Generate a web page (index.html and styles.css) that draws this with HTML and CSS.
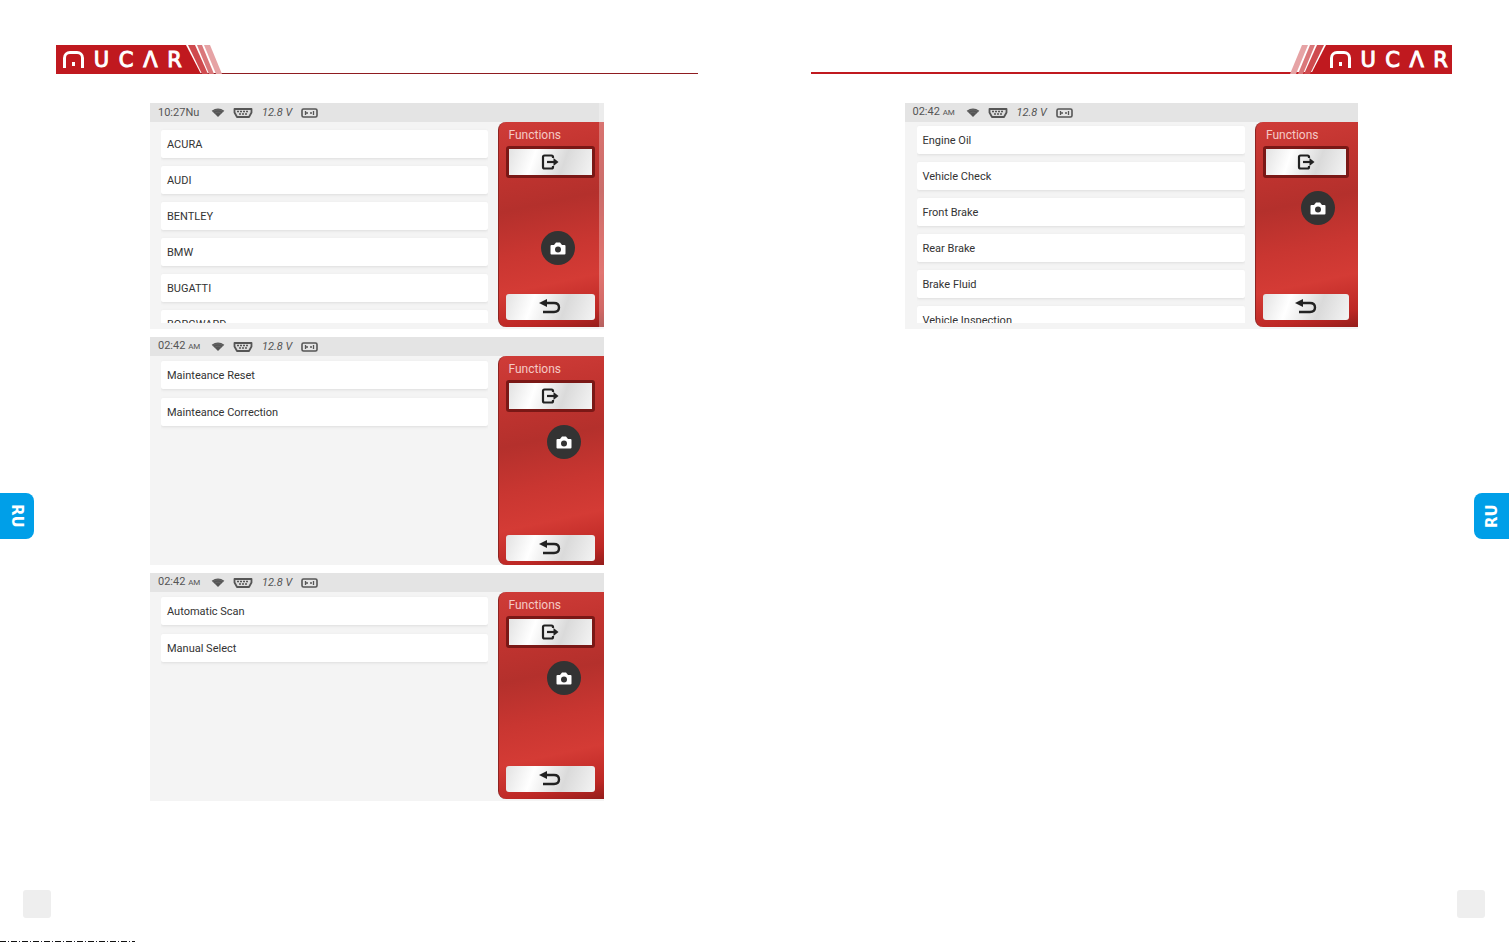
FILE: index.html
```html
<!DOCTYPE html>
<html lang="ru">
<head>
<meta charset="utf-8">
<title>MUCAR</title>
<link rel="stylesheet" href="styles.css">
</head>
<body>
<svg class="defs" aria-hidden="true">
  <symbol id="wifi" viewBox="0 0 14 10"><path d="M0 3Q7-2 14 3L7 10Z" fill="#555"/><path d="M1 4Q7 0 13 4M3 6Q7 3 11 6" fill="none" stroke="#777" stroke-width=".6"/></symbol>
  <symbol id="obd" viewBox="0 0 20 10"><path d="M1.500 1h17v3.500L16 9H4L1.500 4.500Z" fill="#ddd" stroke="#555" stroke-width="1.800" stroke-linejoin="round"/><path d="M4 3.500h12M6 6h8" stroke="#555" stroke-width="1.600" stroke-dasharray="2 1"/></symbol>
  <symbol id="box" viewBox="0 0 17 10"><rect x="1" y="1" width="15" height="8" rx="1.500" fill="none" stroke="#555" stroke-width="1.600"/><path d="M4.500 3v4M4 5h3M9 5h2M12.500 3v4" stroke="#555" stroke-width="1.300"/></symbol>
  <symbol id="exit" viewBox="0 0 18 16"><path d="M12 4V3q0-1.500-1.500-1.500H3.500Q2 1.500 2 3v10q0 1.500 1.500 1.500h7Q12 14.500 12 13v-1" fill="none" stroke="#222" stroke-width="2.200"/><path d="M6 8h8" stroke="#222" stroke-width="2.200"/><path d="M12.500 4 17.500 8l-5 4Z" fill="#222"/></symbol>
  <symbol id="back" viewBox="0 0 22 16"><path d="M5 4h10q5 0 5 4.500T15 13H4" fill="none" stroke="#222" stroke-width="2.400"/><path d="M0 4 8 0v8Z" fill="#222"/></symbol>
  <symbol id="camera" viewBox="0 0 16 13"><path d="M1.500 3H4l2-2.500h4L12 3h2.500q1 0 1 1v7.500q0 1-1 1h-13q-1 0-1-1V4q0-1 1-1Z" fill="#fff"/><circle cx="8" cy="7.500" r="3" fill="#333"/></symbol>
  <symbol id="stripes" viewBox="0 0 38 29"><path d="M0 0h2l15 29H0Z" fill="#c0191f"/><path d="M4 0h7l13 29h-6Z" fill="#cf4a4e"/><path d="M13 0h5l12 29h-5Z" fill="#da777a"/><path d="M20 0h6l12 29h-6Z" fill="#e6a3a5"/></symbol>
</svg>
<main class="spread">
  <section class="page">
    <aside class="edge">
      <div class="tab">RU</div>
      <div class="folio"></div>
    </aside>
    <div class="sheet">
      <header class="header">
        <div class="logo" role="img" aria-label="MUCAR"><span class="logo-m"></span><span>U</span><span>C</span><span>Λ</span><span>R</span></div>
        <svg class="stripes"><use href="#stripes"/></svg>
      </header>
      <div class="screens">
        <article class="screen first">
          <div class="status"><span class="time">10:27Nu</span><svg class="wifi"><use href="#wifi"/></svg><svg class="obd"><use href="#obd"/></svg><i class="volt">12.8 V</i><svg class="box"><use href="#box"/></svg></div>
          <div class="body">
            <ul class="list low"><li><button>ACURA</button></li><li><button>AUDI</button></li><li><button>BENTLEY</button></li><li><button>BMW</button></li><li><button>BUGATTI</button></li><li><button>BORGWARD</button></li></ul>
            <div class="functions"><h2>Functions</h2><button class="key exit" aria-label="Exit"><svg><use href="#exit"/></svg></button><button class="key back" aria-label="Back"><svg><use href="#back"/></svg></button></div>
          </div>
          <button class="camera" aria-label="Screenshot"><svg><use href="#camera"/></svg></button>
        </article>
        <article class="screen">
          <div class="status"><span class="time">02:42 <small>AM</small></span><svg class="wifi"><use href="#wifi"/></svg><svg class="obd"><use href="#obd"/></svg><i class="volt">12.8 V</i><svg class="box"><use href="#box"/></svg></div>
          <div class="body">
            <ul class="list"><li><button>Mainteance Reset</button></li><li><button>Mainteance Correction</button></li></ul>
            <div class="functions cut"><h2>Functions</h2><button class="key exit" aria-label="Exit"><svg><use href="#exit"/></svg></button><button class="key back" aria-label="Back"><svg><use href="#back"/></svg></button></div>
          </div>
          <button class="camera upper" aria-label="Screenshot"><svg><use href="#camera"/></svg></button>
        </article>
        <article class="screen">
          <div class="status"><span class="time">02:42 <small>AM</small></span><svg class="wifi"><use href="#wifi"/></svg><svg class="obd"><use href="#obd"/></svg><i class="volt">12.8 V</i><svg class="box"><use href="#box"/></svg></div>
          <div class="body">
            <ul class="list"><li><button>Automatic Scan</button></li><li><button>Manual Select</button></li></ul>
            <div class="functions"><h2>Functions</h2><button class="key exit" aria-label="Exit"><svg><use href="#exit"/></svg></button><button class="key back" aria-label="Back"><svg><use href="#back"/></svg></button></div>
          </div>
          <button class="camera upper" aria-label="Screenshot"><svg><use href="#camera"/></svg></button>
        </article>
      </div>
    </div>
  </section>
  <section class="page right">
    <div class="sheet">
      <header class="header">
        <svg class="stripes"><use href="#stripes"/></svg>
        <div class="logo" role="img" aria-label="MUCAR"><span class="logo-m"></span><span>U</span><span>C</span><span>Λ</span><span>R</span></div>
      </header>
      <div class="screens">
        <article class="screen short">
          <div class="status"><span class="time">02:42 <small>AM</small></span><svg class="wifi"><use href="#wifi"/></svg><svg class="obd"><use href="#obd"/></svg><i class="volt">12.8 V</i><svg class="box"><use href="#box"/></svg></div>
          <div class="body">
            <ul class="list"><li><button>Engine Oil</button></li><li><button>Vehicle Check</button></li><li><button>Front Brake</button></li><li><button>Rear Brake</button></li><li><button>Brake Fluid</button></li><li><button>Vehicle Inspection</button></li></ul>
            <div class="functions"><h2>Functions</h2><button class="key exit" aria-label="Exit"><svg><use href="#exit"/></svg></button><button class="key back" aria-label="Back"><svg><use href="#back"/></svg></button></div>
          </div>
          <button class="camera upper" aria-label="Screenshot"><svg><use href="#camera"/></svg></button>
        </article>
      </div>
    </div>
    <aside class="edge">
      <div class="tab">RU</div>
      <div class="folio"></div>
    </aside>
  </section>
</main>
<div class="trim" aria-hidden="true"></div>
</body>
</html>
```
FILE: styles.css
```css
* { box-sizing: border-box; }
body { margin: 0; background: #fff; font-family: Roboto, "Liberation Sans", sans-serif; }
button { font: inherit; border: 0; padding: 0; margin: 0; cursor: pointer; }
svg { display: block; }
.defs { position: absolute; width: 0; height: 0; }

.spread { display: grid; grid-template-columns: 1fr 1fr; min-height: 100vh; }
.page { display: grid; grid-template-columns: 56px 1fr 57px; }
.right .sheet { grid-column: 2; }
.sheet { padding-top: 45px; min-width: 0; }

.edge { display: flex; flex-direction: column; justify-content: space-between; padding: 493px 0 24px; }
.right .edge { align-items: flex-end; }
.tab {
  display: flex; align-items: center; justify-content: center;
  width: 34px; height: 46px; border-radius: 0 8px 8px 0;
  background: #009fe8; color: #fff;
  font: bold 15px/20px "DejaVu Sans", sans-serif; writing-mode: vertical-rl;
}
.right .tab { width: 35px; transform: rotate(180deg); }
.folio { width: 28px; height: 28px; margin: 0 23px; border-radius: 3px; background: #eee; }
.right .folio { margin-right: 24px; }

.header { display: flex; height: 29px; border-bottom: 1px solid #8f1c20; }
.right .header { justify-content: flex-end; border-bottom: 2px solid #c0191f; }
.logo {
  display: flex; align-items: center; justify-content: space-between;
  width: 128px; height: 29px; padding: 0 2px 0 7px;
  background: #c0191f; color: #fff;
  font: 21px/28px "DejaVu Sans", sans-serif; -webkit-text-stroke: 1px #fff;
}
.right .logo { width: 124px; padding: 0 4px 0 2px; }
.logo-m { position: relative; width: 21px; height: 17px; border: 3px solid #fff; border-bottom: 0; border-radius: 7px 7px 0 0; }
.logo-m::after { content: ""; position: absolute; left: 6px; bottom: 2px; width: 3px; height: 4px; background: #fff; }
.stripes { width: 38px; height: 29px; }
.right .stripes { transform: scaleX(-1); }

.screens { display: flex; flex-direction: column; gap: 8px; padding: 29px 94px 0; }
.screen { position: relative; display: flex; flex-direction: column; height: 228px; background: #f4f4f4; overflow: hidden; }
.screen.first, .screen.short { height: 226px; }
.status { display: flex; align-items: center; height: 19px; padding-left: 8px; background: #e4e4e4; color: #555; font-size: 11px; line-height: 20px; }
.time { width: 53px; }
.time small { font-size: 8px; }
.wifi { width: 14px; height: 9px; }
.obd { width: 20px; height: 10px; margin-left: 8px; }
.volt { width: 39px; margin-left: 9px; }
.box { width: 17px; height: 10px; }

.body { display: flex; flex: 1; min-height: 0; }
.list { flex: 1; display: flex; flex-direction: column; gap: 9px; margin: 0 10px 6px 11px; padding: 5px 0 0; list-style: none; overflow: hidden; }
.list.low { gap: 8px; padding-top: 8px; }
.short .list { gap: 8px; margin-left: 12px; padding-top: 4px; }
.list li { flex: none; }
.list button {
  display: block; width: 100%; height: 28px; padding: 0 6px; text-align: left;
  background: #fff; border-radius: 2px; box-shadow: 0 1px 3px #ddd;
  color: #333; font-size: 11px; line-height: 30px;
}
.functions {
  display: flex; flex-direction: column; width: 106px; margin-bottom: 2px; padding: 5px 9px 7px 7px;
  border-radius: 8px 0 0 8px; border-left: 1px solid #8d2422;
  background: linear-gradient(168deg, #cf3c38 0%, #c23430 20%, #b4302c 40%, #c93631 60%, #d43b35 76%, #bd2825 92%, #941d1b 100%);
}
.functions.cut { margin-bottom: 0; padding-bottom: 4px; }
.short .functions { width: 103px; }
.functions h2 { margin: 0 0 3px 3px; color: #f5c9c5; font-size: 12px; font-weight: 400; line-height: 16px; }
.key { display: flex; align-items: center; justify-content: center; border-radius: 3px; background: linear-gradient(110deg, #e2e2e2, #fff 30%, #dadada 65%, #f4f4f4); }
.key svg { width: 18px; height: 16px; }
.exit { height: 32px; border: 3px solid #7a1816; }
.back { height: 26px; margin-top: auto; }
.back svg { width: 22px; }
.camera {
  position: absolute; right: 29px; top: 128px; display: grid; place-items: center;
  width: 34px; height: 34px; border-radius: 50%; background: #333;
}
.camera.upper { right: 23px; top: 88px; }
.camera svg { width: 16px; height: 13px; }
.first::after { content: ""; position: absolute; top: 0; right: 0; bottom: 0; width: 5px; background: #ffffff4d; }

.trim {
  position: absolute; left: 0; bottom: 0; width: 135px; height: 1px;
  background: repeating-linear-gradient(90deg, #111 0 6px, #fff 6px 8px, #223 8px 9px, #fff 9px 11px);
}
```
